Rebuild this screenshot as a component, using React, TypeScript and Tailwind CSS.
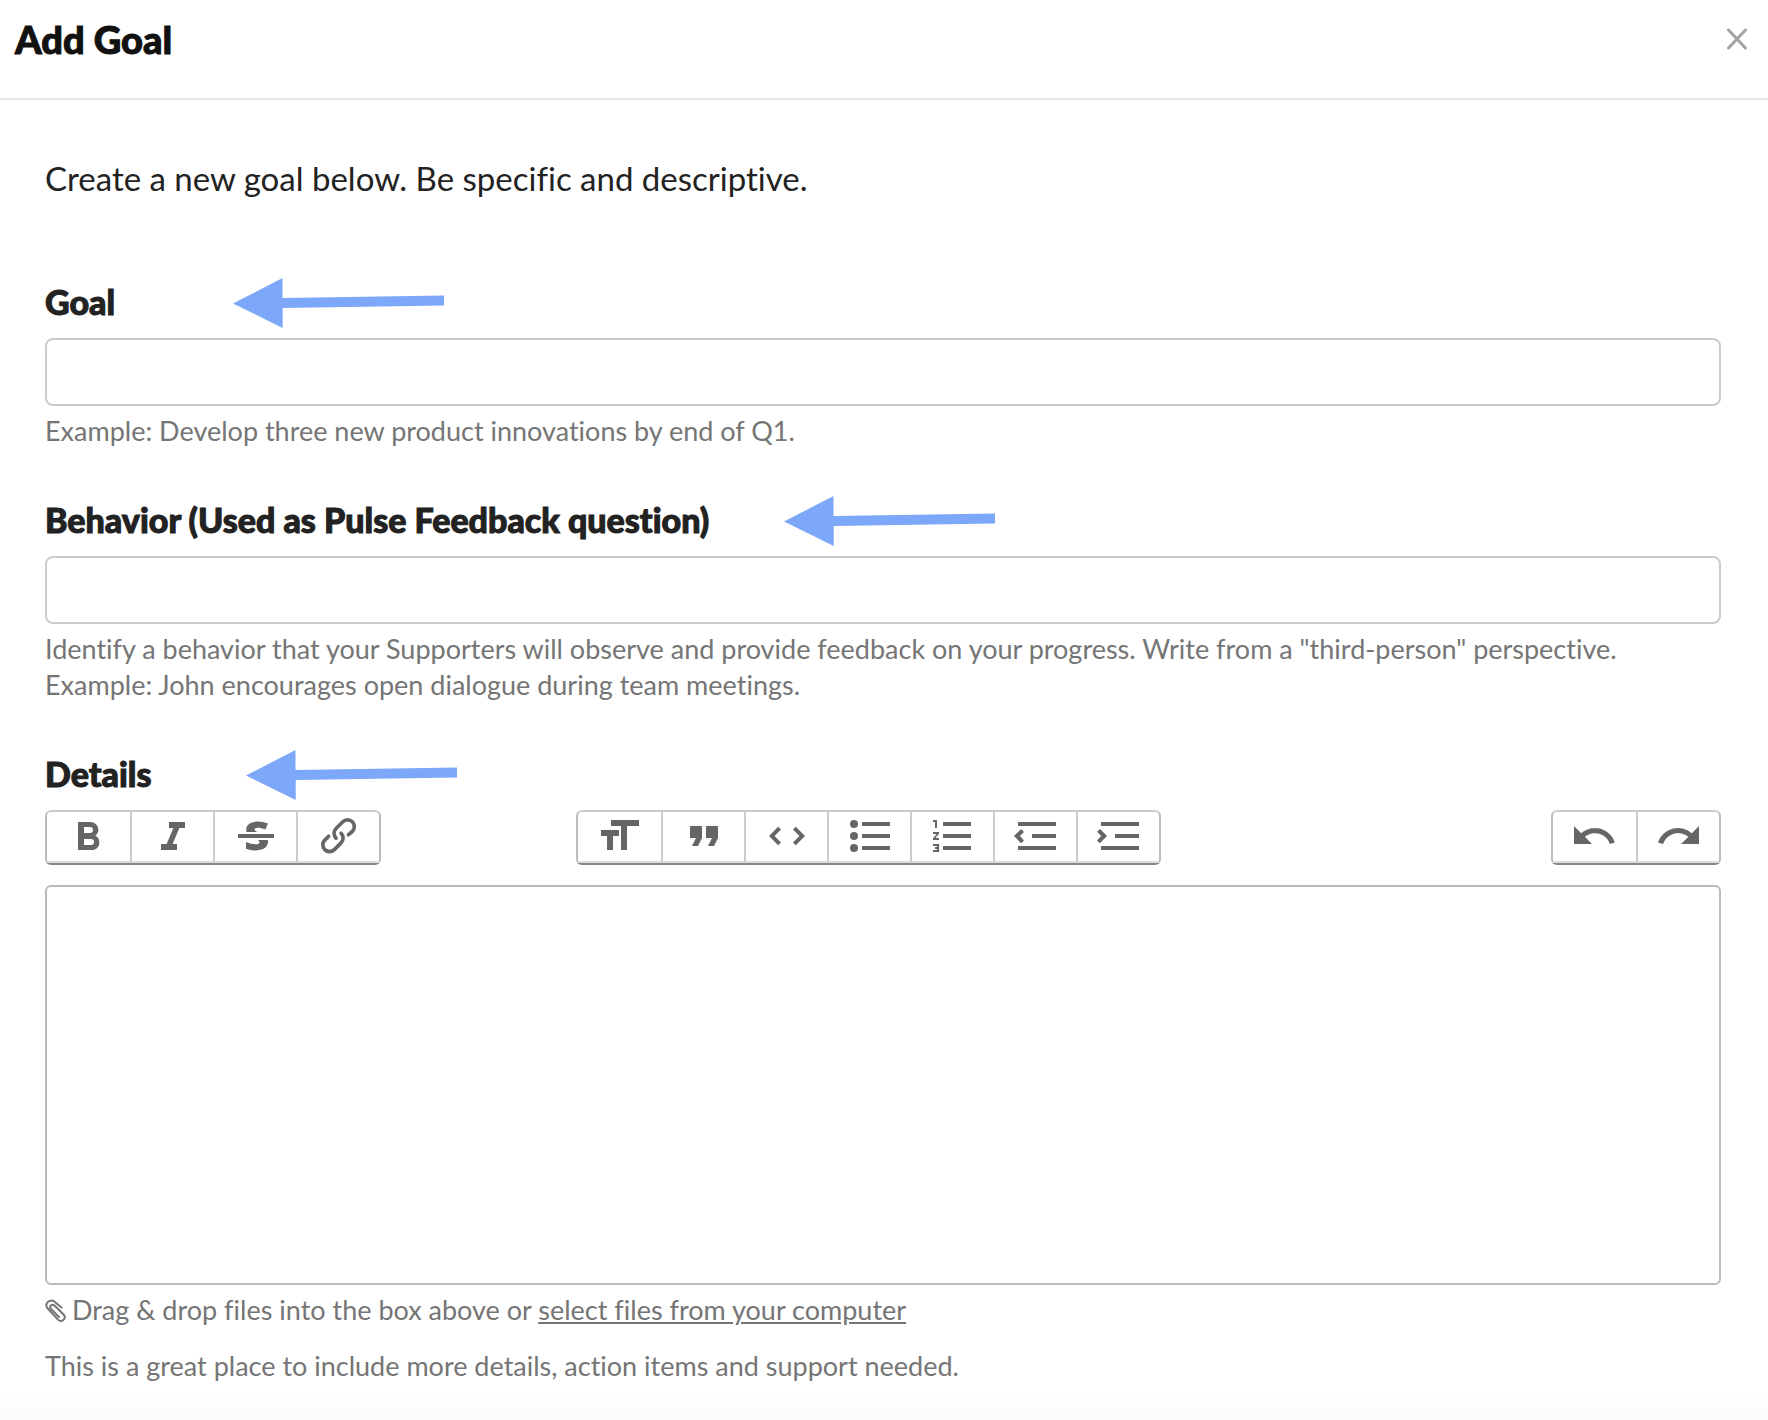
import type { ReactNode } from "react";

type Tool = { label: string; path: string };

const textTools: Tool[] = [
  {
    label: "Bold",
    path: "M15.6 11.8c1-.7 1.6-1.8 1.6-2.8a4 4 0 0 0-4-4H7v14h7c2.1 0 3.7-1.7 3.7-3.8 0-1.5-.8-2.8-2.1-3.4zM10 7.5h3a1.5 1.5 0 1 1 0 3h-3v-3zm3.5 9H10v-3h3.5a1.5 1.5 0 1 1 0 3z",
  },
  { label: "Italic", path: "M10 5v3h2.2l-3.4 8H6v3h8v-3h-2.2l3.4-8H18V5h-8z" },
  {
    label: "Strikethrough",
    path: "M12.73 14l.28.14c.26.15.45.3.57.44.12.14.18.3.18.5 0 .3-.15.56-.44.75-.3.2-.76.3-1.39.3A13.52 13.52 0 0 1 7 14.95v3.37a10.64 10.64 0 0 0 4.84.88c1.26 0 2.35-.19 3.28-.56.93-.37 1.64-.9 2.14-1.57s.74-1.45.74-2.32c0-.26-.02-.51-.06-.75h-5.21zm-5.5-4c-.08-.34-.12-.7-.12-1.1 0-1.29.52-2.3 1.58-3.02 1.05-.72 2.5-1.08 4.34-1.08 1.62 0 3.28.34 4.97 1l-1.3 2.93c-1.47-.6-2.73-.9-3.8-.9-.55 0-.96.08-1.2.26-.26.17-.38.38-.38.64 0 .27.16.52.48.74.17.12.53.3 1.05.53H7.23zM3 13h18v-2H3v2z",
  },
  {
    label: "Link",
    path: "M9.88 13.7a4.3 4.3 0 0 1 0-6.07l3.37-3.37a4.26 4.26 0 0 1 6.07 0 4.3 4.3 0 0 1 0 6.06l-1.96 1.72a.91.91 0 1 1-1.3-1.3l1.97-1.71a2.46 2.46 0 0 0-3.48-3.48l-3.38 3.37a2.46 2.46 0 0 0 0 3.48.91.91 0 1 1-1.3 1.3zM4.25 19.46a4.3 4.3 0 0 1 0-6.07l1.93-1.9a.91.91 0 1 1 1.3 1.3l-1.93 1.9a2.46 2.46 0 0 0 3.48 3.48l3.37-3.38c.96-.96.96-2.52 0-3.48a.91.91 0 1 1 1.3-1.3 4.3 4.3 0 0 1 0 6.07l-3.38 3.38a4.26 4.26 0 0 1-6.07 0z",
  },
];

const blockTools: Tool[] = [
  { label: "Heading", path: "M12 9v3H9v7H6v-7H3V9h9zM8 4h14v3h-6v12h-3V7H8V4z" },
  { label: "Quote", path: "M6 17h3l2-4V7H5v6h3zm8 0h3l2-4V7h-6v6h3z" },
  {
    label: "Code",
    path: "M18.2 12L15 15.2l1.4 1.4L21 12l-4.6-4.6L15 8.8l3.2 3.2zM5.8 12L9 8.8 7.6 7.4 3 12l4.6 4.6L9 15.2 5.8 12z",
  },
  {
    label: "Bullets",
    path: "M4 4a2 2 0 1 0 0 4 2 2 0 0 0 0-4zm0 6a2 2 0 1 0 0 4 2 2 0 0 0 0-4zm0 6a2 2 0 1 0 0 4 2 2 0 0 0 0-4zm4 3h14v-2H8v2zm0-6h14v-2H8v2zm0-8v2h14V5H8z",
  },
  {
    label: "Numbers",
    path: "M2 17h2v.5H3v1h1v.5H2v1h3v-4H2v1zm1-9h1V4H2v1h1v3zm-1 3h1.8L2 13.1v.9h3v-1H3.2L5 10.9V10H2v1zm5-6v2h14V5H7zm0 14h14v-2H7v2zm0-6h14v-2H7v2z",
  },
  {
    label: "Decrease Level",
    path: "M3 19h19v-2H3v2zm7-6h12v-2H10v2zm-8.3-.3l2.8 2.9L6 14.2 4 12l2-2-1.4-1.5L1 12l.7.7zM3 5v2h19V5H3z",
  },
  {
    label: "Increase Level",
    path: "M3 19h19v-2H3v2zm7-6h12v-2H10v2zm-6.9-1L1 14.2l1.4 1.4L6 12l-.7-.7-2.8-2.8L1 9.900 3.1 12zM3 5v2h19V5H3z",
  },
];

const historyTools: Tool[] = [
  {
    label: "Undo",
    path: "M12.5 8c-2.6 0-5 1-6.9 2.6L2 7v9h9l-3.6-3.6A8 8 0 0 1 20 16l2.4-.8a10.5 10.5 0 0 0-10-7.2z",
  },
  {
    label: "Redo",
    path: "M18.4 10.6a10.5 10.5 0 0 0-16.9 4.6L4 16a8 8 0 0 1 12.7-3.6L13 16h9V7l-3.6 3.6z",
  },
];

function ToolGroup({ tools }: { tools: Tool[] }) {
  return (
    <div className="flex rounded-md border-2 border-[#bbb] border-t-[#ccc] border-b-[#888]">
      {tools.map((tool) => (
        <button
          key={tool.label}
          type="button"
          aria-label={tool.label}
          className="flex h-[51px] w-[83px] items-center justify-center border-b-2 border-l-2 border-b-[#ddd] border-l-[#ccc] pb-px first:border-l-0 first:pr-px"
        >
          <svg viewBox="0 0 24 24" className="size-12 fill-[#666]">
            <path d={tool.path} />
          </svg>
        </button>
      ))}
    </div>
  );
}

function Arrow({ className }: { className: string }) {
  return (
    <svg
      viewBox="0 0 211 50"
      className={`absolute -top-1 h-[50px] w-[211px] fill-[#7da7f8] ${className}`}
    >
      <path d="M0 25.5 49.5 0V20L211 17.5V27.5L49.7 30V50Z" />
    </svg>
  );
}

type FieldProps = {
  id: string;
  label: string;
  arrow: string;
  children: ReactNode;
};

function Field({ id, label, arrow, children }: FieldProps) {
  return (
    <div>
      <div className="relative mb-4">
        <label
          htmlFor={id}
          className="block text-[34px] leading-10 font-black [-webkit-text-stroke:1px_#222]"
        >
          {label}
        </label>
        <Arrow className={arrow} />
      </div>
      {children}
    </div>
  );
}

const inputStyle = "block h-[68px] w-full rounded-lg border-2 border-[#ccc] bg-white px-4 text-[33px]";
const hintStyle = "mt-[7px] text-[27px] leading-9 text-[#757575]";

export default function App() {
  return (
    <div className="min-h-screen bg-linear-to-t from-[#fafafa] to-white to-[32px] font-['Lato',sans-serif] text-[#222] [font-variant-ligatures:none]">

      {/* Header */}
      <header className="flex h-[100px] items-start justify-between border-b-2 border-[#e4e4e4] pt-[15px] pr-5 pl-[15px]">
        <h1 className="text-[38px] leading-12 font-black text-[#111] [-webkit-text-stroke:1px_#111]">
          Add Goal
        </h1>
        <button type="button" aria-label="Close" className="pt-[13px]">
          <svg viewBox="0 0 22 22" className="size-[22px] fill-none stroke-[#a3a3a3] stroke-3">
            <path d="M2.5 2 19.5 20M19.5 2 2.5 20" strokeLinecap="round" />
          </svg>
        </button>
      </header>

      <form className="pt-[58px] pr-[47px] pl-[45px]">
        <p className="mb-[84px] text-[33px] leading-10">
          Create a new goal below. Be specific and descriptive.
        </p>

        <div className="flex flex-col gap-[51px]">
          <Field id="goal" label="Goal" arrow="left-[188px]">
            <input id="goal" type="text" className={inputStyle} />
            <p className={hintStyle}>Example: Develop three new product innovations by end of Q1.</p>
          </Field>

          <Field
            id="behavior"
            label="Behavior (Used as Pulse Feedback question)"
            arrow="left-[739px]"
          >
            <input id="behavior" type="text" className={inputStyle} />
            <p className={hintStyle}>
              Identify a behavior that your Supporters will observe and provide feedback on your
              progress. Write from a "third-person" perspective.
              <br />
              Example: John encourages open dialogue during team meetings.
            </p>
          </Field>

          <Field id="details" label="Details" arrow="left-[201px]">
            {/* Toolbar */}
            <div className="mb-5 flex">
              <ToolGroup tools={textTools} />
              <div className="grow" />
              <ToolGroup tools={blockTools} />
              <div className="grow-2" />
              <ToolGroup tools={historyTools} />
            </div>

            <textarea
              id="details"
              className="block h-[400px] w-full resize-none rounded-md border-2 border-[#bbb] bg-white p-4 text-[33px]"
            />

            {/* Attachments */}
            <p className={hintStyle}>
              <svg
                viewBox="0 0 21 23"
                className="mr-1.5 inline h-[23px] w-[21px] fill-none stroke-[#757575] stroke-2 align-[-2px]"
              >
                <path
                  d="M16.5 8.5 9.3 2.6C5.3-.6-1 4.3 2.3 9L13 20.6c3.5 3.4 8.6-1 6-4.6L9.6 6.6C7 4.5 4 7 5.8 9.6L14 18"
                  strokeLinecap="round"
                />
              </svg>
              Drag &amp; drop files into the box above or{" "}
              <a href="#details" className="underline">
                select files from your computer
              </a>
            </p>
            <p className="mt-5 text-[27px] leading-9 text-[#757575]">
              This is a great place to include more details, action items and support needed.
            </p>
          </Field>
        </div>
      </form>
    </div>
  );
}
